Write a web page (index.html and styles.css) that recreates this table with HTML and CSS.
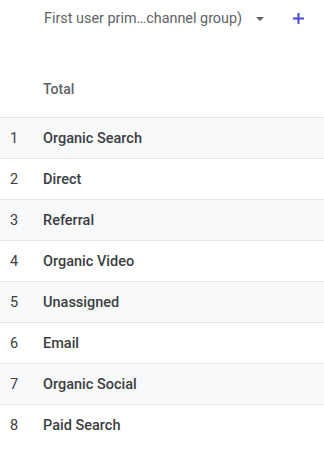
FILE: index.html
```html
<!DOCTYPE html>
<html>
<head>
<meta charset="utf-8">
<link rel="stylesheet" href="styles.css">
</head>
<body>
<div class="table">
  <div class="header">
    <span class="dim">First user prim…channel group)</span>
    <svg class="caret" width="8" height="4" viewBox="0 0 8 4"><path d="M0 0 L8 0 L4 4 Z" fill="#5f6368"/></svg>
    <svg class="plus" width="11" height="11" viewBox="0 0 11 11"><path d="M5.5 0 V11 M0 5.5 H11" stroke="#4b4bd9" stroke-width="2"/></svg>
  </div>
  <div class="total">Total</div>
  <div class="row alt"><span class="num">1</span><span class="name">Organic Search</span></div>
  <div class="row"><span class="num">2</span><span class="name">Direct</span></div>
  <div class="row alt"><span class="num">3</span><span class="name">Referral</span></div>
  <div class="row"><span class="num">4</span><span class="name">Organic Video</span></div>
  <div class="row alt"><span class="num">5</span><span class="name">Unassigned</span></div>
  <div class="row"><span class="num">6</span><span class="name">Email</span></div>
  <div class="row alt"><span class="num">7</span><span class="name">Organic Social</span></div>
  <div class="row last"><span class="num">8</span><span class="name">Paid Search</span></div>
</div>
</body>
</html>
```
FILE: styles.css
```css
html, body {
  margin: 0;
  padding: 0;
  background: #ffffff;
}
body {
  font-family: Roboto, "Liberation Sans", sans-serif;
  font-size: 14px;
}
.table {
  display: flex;
  flex-direction: column;
}
.header {
  height: 37px;
  display: flex;
  align-items: center;
  padding-left: 44px;
  color: #5f6368;
  font-size: 14.4px;
}
.caret {
  margin-left: 14px;
}
.plus {
  margin-left: 29px;
}
.total {
  height: 80px;
  box-sizing: border-box;
  display: flex;
  align-items: center;
  padding-left: 43px;
  padding-top: 24px;
  color: #5f6368;
  font-weight: 500;
  font-size: 14px;
}
.row {
  height: 41px;
  box-sizing: border-box;
  border-top: 1px solid #e3e4e7;
  display: flex;
  align-items: center;
  color: #3c4043;
  font-size: 14.5px;
}
.row.alt {
  background: #f8f9fa;
}
.num {
  width: 43px;
  box-sizing: border-box;
  padding-left: 10px;
}
.name {
  font-weight: 500;
}
```
